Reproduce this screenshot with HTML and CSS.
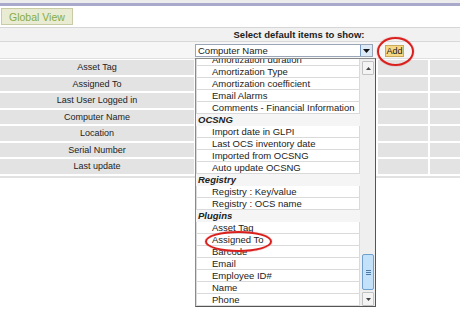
FILE: index.html
```html
<!DOCTYPE html>
<html lang="en">
<head>
    <meta charset="UTF-8">
    <title>Global View</title>
    <link rel="stylesheet" href="styles.css">
</head>
<body>
    <div class="topbar"></div>
    <div class="tabs"><span class="tab">Global View</span></div>

    <div class="head">
        <div class="title">Select default items to show:</div>
    </div>
    <div class="pick">
        <div class="select">
            <span>Computer Name</span>
            <span class="arrow"><svg width="7" height="4" viewBox="0 0 7 4"><path d="M0 0h7L3.5 4z" fill="#111"/></svg></span>
        </div>
        <div class="addcell"><button class="add">Add</button></div>
    </div>

    <div class="rows">
        <div class="label">Asset Tag</div><div></div><div></div><div></div>
        <div class="label">Assigned To</div><div></div><div></div><div></div>
        <div class="label">Last User Logged in</div><div></div><div></div><div></div>
        <div class="label">Computer Name</div><div></div><div></div><div></div>
        <div class="label">Location</div><div></div><div></div><div></div>
        <div class="label">Serial Number</div><div></div><div></div><div></div>
        <div class="label">Last update</div><div></div><div></div><div></div>
    </div>

    <div class="dropdown">
        <ul class="items">
            <li>Amortization duration</li>
            <li>Amortization Type</li>
            <li>Amortization coefficient</li>
            <li>Email Alarms</li>
            <li>Comments - Financial Information</li>
            <li class="group">OCSNG</li>
            <li>Import date in GLPI</li>
            <li>Last OCS inventory date</li>
            <li>Imported from OCSNG</li>
            <li>Auto update OCSNG</li>
            <li class="group">Registry</li>
            <li>Registry : Key/value</li>
            <li>Registry : OCS name</li>
            <li class="group">Plugins</li>
            <li>Asset Tag</li>
            <li>Assigned To</li>
            <li>Barcode</li>
            <li>Email</li>
            <li>Employee ID#</li>
            <li>Name</li>
            <li>Phone</li>
        </ul>
        <div class="scroll">
            <div class="btn"><svg width="5" height="3" viewBox="0 0 5 3"><path d="M0 3h5L2.5 0z" fill="#444"/></svg></div>
            <div class="track"><div class="thumb"><span></span><span></span><span></span></div></div>
            <div class="btn"><svg width="5" height="3" viewBox="0 0 5 3"><path d="M0 0h5L2.5 3z" fill="#444"/></svg></div>
        </div>
    </div>

    <div class="mark mark-add"></div>
    <div class="mark mark-assigned"></div>
</body>
</html>
```

FILE: styles.css
```css
html, body { height: 100%; }
body { margin: 0; background: #fff; font-family: "Liberation Sans", Arial, sans-serif; font-size: 9px; color: #222; position: relative; overflow: hidden; }
.topbar { height: 3px; background: #ececec; border-bottom: 3px solid #a9a9cc; }
.tabs { height: 21px; padding-left: 1px; border-bottom: 1px solid #d6d6d6; }
.tab { display: inline-block; margin-top: 2px; height: 17px; line-height: 17px; padding: 0 7px; background: #e9ebd2; border: 1px solid #c9cba5; color: #84ad42; font-size: 10.5px; box-sizing: border-box; }
.head, .pick, .rows { display: grid; grid-template-columns: 194px 180px 50px 1fr; column-gap: 2px; }
.head { height: 13px; background: #f1f1f1; border-bottom: 1px solid #d8d8d8; }
.title { grid-column: 2 / 4; text-align: center; padding-right: 26px; font-weight: bold; font-size: 9.5px; line-height: 13px; color: #222; }
.pick { height: 16px; background: #f6f6f6; border-bottom: 1px solid #e0e0e0; }
.select { grid-column: 2; margin: 2px 0 0 -1px; width: 178px; height: 13px; box-sizing: border-box; border: 1px solid #9aa6b8; background: #fff; display: flex; justify-content: space-between; align-items: center; padding-left: 2px; font-size: 9.5px; }
.arrow { width: 11px; height: 11px; background: #dce9f7; border-left: 1px solid #7b9bc6; display: flex; align-items: center; justify-content: center; }
.addcell { grid-column: 3; padding: 3px 0 0 7px; }
.add { height: 12px; width: 19px; padding: 0; border: 1px solid #c9a95a; background: #f6d784; font-family: inherit; font-size: 9px; color: #222; }
.rows { margin-top: 1px; row-gap: 2px; grid-auto-rows: 14.5px; border-bottom: 2px solid #e2e2e2; padding-bottom: 2px; }
.rows div { background: #e3e3e3; }
.label { text-align: center; line-height: 15px; color: #222; }
.dropdown { position: absolute; left: 195px; top: 58px; width: 181px; height: 249px; box-sizing: border-box; border: 1px solid #8a8a8a; border-right-color: #555; border-bottom-color: #555; background: #fff; display: flex; overflow: hidden; }
.items { list-style: none; margin: -5px 0 0; padding: 0; flex: 1; }
.items li { height: 12px; line-height: 12px; box-sizing: border-box; padding-left: 15px; border: 1px solid #dadada; border-top: none; white-space: nowrap; color: #222; font-size: 9.5px; }
.items li.group { padding-left: 1px; border-color: transparent; background: #f5f5f5; font-weight: bold; font-style: italic; }
.scroll { width: 15px; background: #efefef; display: flex; flex-direction: column; padding: 2px 1px 0 2px; box-sizing: border-box; }
.btn { height: 12px; border: 1px solid #c2c2c2; background: #f4f4f4; border-radius: 1px; display: flex; align-items: center; justify-content: center; }
.track { flex: 1; display: flex; flex-direction: column; justify-content: flex-end; padding-bottom: 2px; }
.thumb { height: 36px; box-sizing: border-box; border: 1px solid #6d9fcf; border-radius: 2px; background: #c3e1f8; display: flex; flex-direction: column; align-items: center; justify-content: center; gap: 1px; }
.thumb span { width: 5px; height: 1px; background: #4a7aa8; }
.mark { position: absolute; border: 2px solid #d9201e; border-radius: 50%; box-shadow: 0 0 1px #d9201e; }
.mark-add { left: 377px; top: 37px; width: 33px; height: 25px; }
.mark-assigned { left: 205px; top: 231px; width: 63px; height: 17px; }
```
